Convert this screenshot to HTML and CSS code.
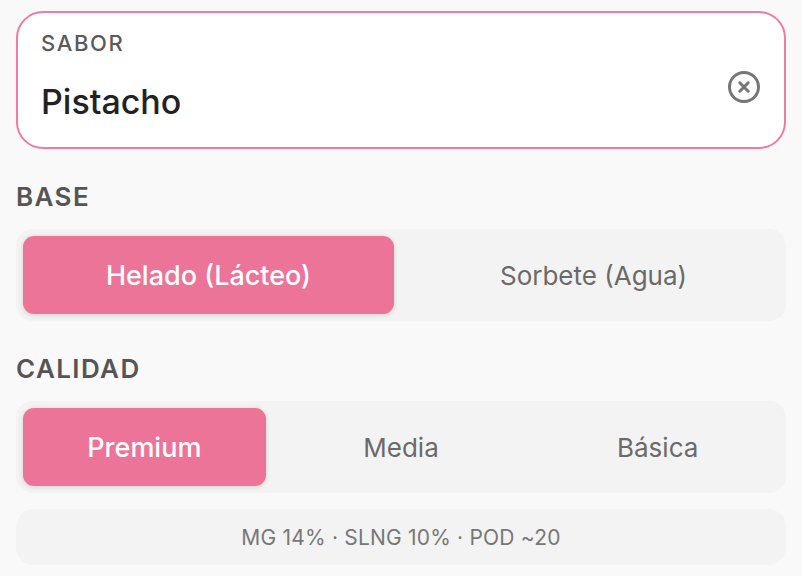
FILE: index.html
```html
<!DOCTYPE html>
<html lang="es">
<head>
<meta charset="utf-8">
<title>Sabor</title>
<link rel="stylesheet" href="styles.css">
</head>
<body>
<main class="screen">
  <div class="field">
    <div class="field-body">
      <div class="field-label">SABOR</div>
      <div class="field-value">Pistacho</div>
    </div>
    <button class="clear" aria-label="Borrar">
      <svg width="32" height="32" viewBox="0 0 32 32" fill="none" stroke="#767676" stroke-width="3" stroke-linecap="round">
        <circle cx="16" cy="16" r="14.5"/>
        <path d="M11.8 11.8 L20.2 20.2 M20.2 11.8 L11.8 20.2"/>
      </svg>
    </button>
  </div>

  <section class="group">
    <h2 class="group-title">BASE</h2>
    <div class="segmented">
      <div class="seg seg-active">Helado (Lácteo)</div>
      <div class="seg">Sorbete (Agua)</div>
    </div>
  </section>

  <section class="group">
    <h2 class="group-title">CALIDAD</h2>
    <div class="segmented">
      <div class="seg seg-active">Premium</div>
      <div class="seg">Media</div>
      <div class="seg">Básica</div>
    </div>
  </section>

  <div class="info">MG 14% · SLNG 10% · POD ~20</div>
</main>
</body>
</html>
```

FILE: styles.css
```css
* { box-sizing: border-box; }
html, body { margin: 0; padding: 0; }
body {
  background: #f9f9f9;
  font-family: Inter, "Noto Sans", sans-serif;
  color: #222;
}
.screen {
  padding: 11px 16px 0 16px;
}
.field {
  display: flex;
  height: 138px;
  background: #fff;
  border: 2px solid #ef7ba1;
  border-radius: 27px;
  padding: 17px 24px 0 23px;
}
.field-body { flex: 1; }
.field-label {
  font-size: 22px;
  line-height: 26px;
  font-weight: 500;
  letter-spacing: 1.6px;
  color: #5a5a5a;
}
.field-value {
  margin-top: 26px;
  font-size: 34px;
  line-height: 40px;
  font-weight: 500;
  color: #222;
}
.clear {
  margin-top: 41px;
  width: 32px;
  height: 32px;
  padding: 0;
  border: 0;
  background: none;
  align-self: flex-start;
}
.clear svg { display: block; }

.group { margin-top: 32px; }
.group-title {
  margin: 0 0 16px 0;
  font-size: 26px;
  line-height: 32px;
  font-weight: 600;
  letter-spacing: 1.4px;
  color: #555;
}
.segmented {
  display: flex;
  gap: 14px;
  height: 92px;
  padding: 7px;
  background: #f3f3f3;
  border-radius: 17px;
}
.seg {
  flex: 1;
  display: flex;
  align-items: center;
  justify-content: center;
  border-radius: 11px;
  font-size: 26px;
  color: #6a6a6a;
}
.seg-active {
  background: #ed7499;
  color: #fff;
  font-size: 27px;
  font-weight: 500;
  box-shadow: 0 1px 5px rgba(0, 0, 0, 0.14);
}
.info {
  margin-top: 16px;
  height: 56px;
  display: flex;
  align-items: center;
  justify-content: center;
  background: #f3f3f3;
  border-radius: 18px;
  font-size: 21px;
  letter-spacing: 0.2px;
  color: #777;
}
```
